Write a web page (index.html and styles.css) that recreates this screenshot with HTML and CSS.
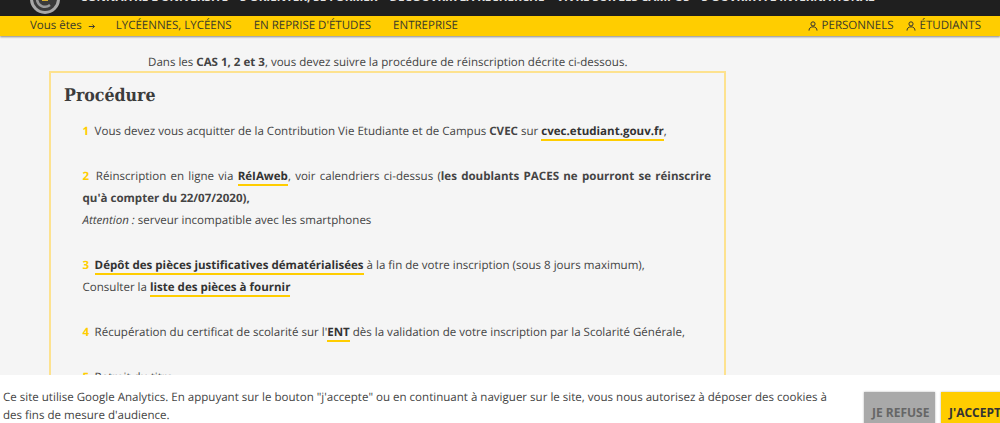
FILE: index.html
```html
<!DOCTYPE html>
<html lang="fr">
<head>
<meta charset="utf-8">
<title>Procédure</title>
<link rel="stylesheet" href="styles.css">
</head>
<body>
<header class="top">
  <svg class="logo" viewBox="0 0 30 30" width="30" height="30" aria-hidden="true"><circle cx="15" cy="15" r="13.500" fill="#3a3a3a" stroke="#a8a8a8" stroke-width="3"/><path d="M7 15a8 8 0 0 0 13 6M23 15a8 8 0 0 0-3-6" fill="none" stroke="#9a9a9a" stroke-width="2.500"/><rect x="12" y="8" width="6" height="9" fill="#d8b030"/></svg>
  <nav class="mainnav"><span>CONNAÎTRE L'UNIVERSITÉ</span><span>S'ORIENTER, SE FORMER</span><span>DÉCOUVRIR LA RECHERCHE</span><span>VIVRE SUR LES CAMPUS</span><span>S'OUVRIR À L'INTERNATIONAL</span></nav>
</header>
<div class="subnav">
  <div class="subleft">
    <span class="who">Vous êtes <svg class="arrow" viewBox="0 0 10 8" width="8" height="7" aria-hidden="true"><path d="M1 4h7M5.500 1.500 8 4 5.500 6.500" fill="none" stroke="#333" stroke-width="1.200"/></svg></span>
    <a>LYCÉENNES, LYCÉENS</a><a>EN REPRISE D'ÉTUDES</a><a>ENTREPRISE</a>
  </div>
  <div class="subright">
    <a><svg viewBox="0 0 12 12" width="10" height="10" aria-hidden="true"><circle cx="6" cy="3.500" r="2.500" fill="none" stroke="#333" stroke-width="1.200"/><path d="M1.200 11.500c0-3 2-4.500 4.800-4.500s4.800 1.500 4.800 4.500" fill="none" stroke="#333" stroke-width="1.200"/></svg>PERSONNELS</a>
    <a><svg viewBox="0 0 12 12" width="10" height="10" aria-hidden="true"><circle cx="6" cy="3.500" r="2.500" fill="none" stroke="#333" stroke-width="1.200"/><path d="M1.200 11.500c0-3 2-4.500 4.800-4.500s4.800 1.500 4.800 4.500" fill="none" stroke="#333" stroke-width="1.200"/></svg>ÉTUDIANTS</a>
  </div>
</div>
<main class="content">
  <p class="intro">Dans les <b>CAS 1, 2 et 3</b>, vous devez suivre la procédure de réinscription décrite ci-dessous.</p>
  <section class="box">
    <h2>Procédure</h2>
    <p class="step"><b class="n">1</b> Vous devez vous acquitter de la Contribution Vie Etudiante et de Campus <b>CVEC</b> sur <a>cvec.etudiant.gouv.fr</a>,</p>
    <p class="step just"><b class="n">2</b> Réinscription en ligne via <a>RéIAweb</a>, voir calendriers ci-dessus (<b>les doublants PACES ne pourront se réinscrire qu'à compter du 22/07/2020),</b><br><i>Attention :</i> serveur incompatible avec les smartphones</p>
    <p class="step"><b class="n">3</b> <a>Dépôt des pièces justificatives dématérialisées</a> à la fin de votre inscription (sous 8 jours maximum),<br>Consulter la <a>liste des pièces à fournir</a></p>
    <p class="step"><b class="n">4</b> Récupération du certificat de scolarité sur l'<a>ENT</a> dès la validation de votre inscription par la Scolarité Générale,</p>
    <p class="step"><b class="n">5</b> Retrait du titre</p>
  </section>
</main>
<aside class="cookie">
  <p>Ce site utilise Google Analytics. En appuyant sur le bouton "j'accepte" ou en continuant à naviguer sur le site, vous nous autorisez à déposer des cookies à des fins de mesure d'audience.</p>
  <div class="btns"><button class="refuse">JE REFUSE</button><button class="accept">J'ACCEPTE</button></div>
</aside>
</body>
</html>
```
FILE: styles.css
```css
html, body { margin: 0; height: 423px; overflow: hidden; }
body { background: #f5f5f5; color: #444; font: 11.55px/22px "Open Sans", sans-serif; text-rendering: geometricPrecision; position: relative; }
.top { height: 16px; background: #1f1f1f; display: flex; align-items: flex-start; padding-left: 30px; overflow: hidden; }
.logo { flex: none; margin-top: -16px; }
.mainnav { display: flex; gap: 12px; margin: -8px 0 0 20px; color: #e4e4e4; font-weight: 700; font-size: 11.6px; line-height: 12px; }
.mainnav span { white-space: nowrap; }
.subnav { height: 20px; background: #ffcd00; display: flex; justify-content: space-between; align-items: center; padding: 0 19px 0 30px; box-shadow: 0 1px 2px rgba(0,0,0,.45); color: #3a3a2a; position: relative; }
.subleft, .subright { display: flex; align-items: center; }
.subleft { gap: 22px; font-size: 11.5px; }
.who { display: inline-flex; gap: 6px; align-items: center; margin-right: -2px; }
.subright { gap: 12px; }
.subright a { display: flex; gap: 4px; align-items: center; }
.content { width: 677px; margin-left: 49px; }
.intro { margin: 18px 0 0; padding-left: 99px; height: 17px; line-height: 17px; }
.box { border: 2px solid #fde28f; padding: 8px 13px 0 13px; height: 340px; box-sizing: border-box; width: 677px; }
h2 { font: 700 17.6px/30px "DejaVu Serif Condensed", "DejaVu Serif", serif; font-stretch: condensed; margin: 0 0 10px; color: #3c3c3c; }
.step { margin: 0 0 23px; padding-left: 18.5px; }
.step.just { text-align: justify; }
.n { color: #ffcd00; margin-right: 2.5px; }
.step a { font-weight: 700; border-bottom: 2px solid #ffcd00; color: #333; }
.cookie { position: absolute; left: 0; right: 0; top: 375px; height: 48px; background: #fff; display: flex; padding: 14px 0 0 3px; box-sizing: border-box; overflow: hidden; }
.cookie p { margin: 0; width: 840px; line-height: 18px; flex: none; }
.btns { display: flex; gap: 6px; margin-left: 21px; flex: none; margin-top: 3px; }
button { border: 0; height: 40px; font: 700 12px "Open Sans", sans-serif; padding: 0 8px; box-shadow: 0 0 2px rgba(0,0,0,.3); white-space: nowrap; }
.refuse { background: #a9a9a9; color: #666; width: 71px; }
.accept { background: #ffcd00; color: #333; }
```
